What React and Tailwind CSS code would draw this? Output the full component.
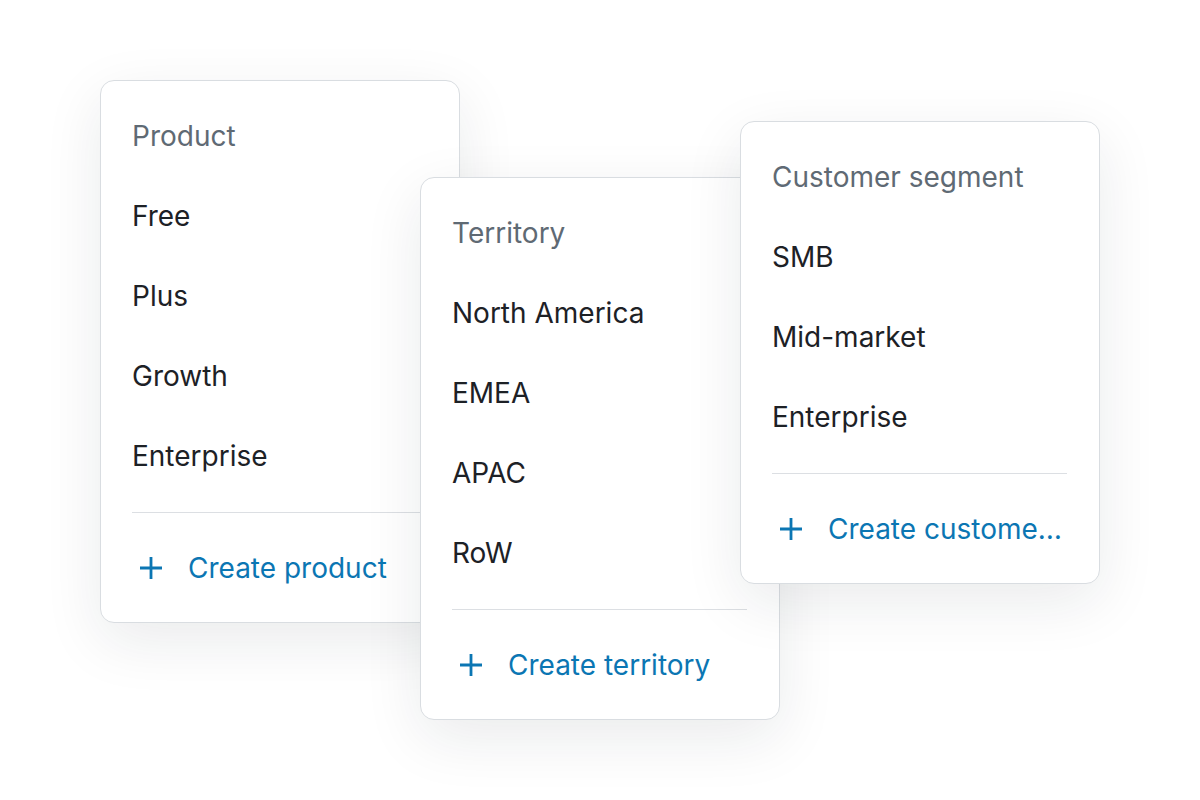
import React from 'react';

const cards = [
  {
    id: 'product',
    title: 'Product',
    items: ['Free', 'Plus', 'Growth', 'Enterprise'],
    action: 'Create product',
    pos: 'left-[100px] top-[80px] z-10',
  },
  {
    id: 'territory',
    title: 'Territory',
    items: ['North America', 'EMEA', 'APAC', 'RoW'],
    action: 'Create territory',
    pos: 'left-[420px] top-[177px] z-20',
  },
  {
    id: 'segment',
    title: 'Customer segment',
    items: ['SMB', 'Mid-market', 'Enterprise'],
    action: 'Create customer segment',
    pos: 'left-[740px] top-[121px] z-30',
  },
];

function PlusIcon() {
  return (
    <svg width="24" height="24" viewBox="0 0 24 24" className="shrink-0 ml-[7px]" fill="none" stroke="currentColor" strokeWidth="2.8">
      <path d="M12 1v22M1 12h22" />
    </svg>
  );
}

function OptionCard({ card }) {
  return (
    <div className={`absolute ${card.pos} w-[360px] bg-white border border-[#d9dde1] rounded-[14px] shadow-[0_18px_60px_rgba(20,30,40,0.09)] pl-[31px] pr-8 pt-[15px] pb-[14px]`}>
      <div className="h-20 flex items-center text-[#5f6a74]">{card.title}</div>
      {card.items.map((item) => (
        <div key={item} className="h-20 flex items-center text-[#1d2126]">
          {item}
        </div>
      ))}
      <div className="mt-4 h-px bg-[#dcdfe3]"></div>
      <button className="mt-[15px] h-20 w-full flex items-center gap-[25px] text-[#0b76b3] text-left">
        <PlusIcon />
        <span className="truncate leading-normal">{card.action}</span>
      </button>
    </div>
  );
}

export default function App() {
  return (
    <div className="relative w-[1200px] h-[800px] bg-white overflow-hidden text-[28px] leading-none font-['Inter','Liberation_Sans',sans-serif]">
      {cards.map((card) => (
        <OptionCard key={card.id} card={card} />
      ))}
    </div>
  );
}
